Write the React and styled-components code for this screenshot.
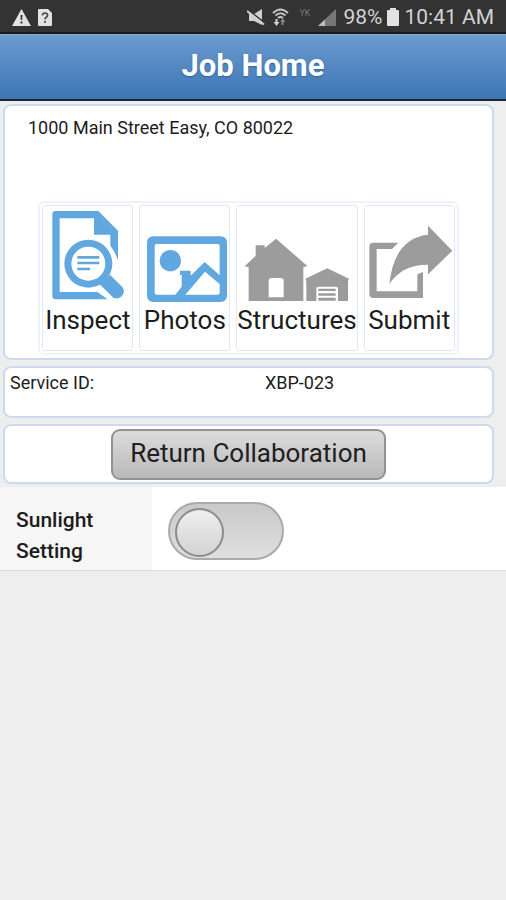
import React from "react";
import styled, { createGlobalStyle } from "styled-components";

const GlobalStyle = createGlobalStyle`
  *, *::before, *::after { box-sizing: border-box; }
  body {
    margin: 0;
    background: #eeeeee;
    color: #1c1c1c;
    font-family: Roboto, "Liberation Sans", sans-serif;
  }
`;

const StatusBar = styled.div`
  display: flex;
  align-items: center;
  justify-content: space-between;
  height: 34px;
  padding: 2px 12px 0;
  background: #333333;
  border-bottom: 2px solid #1d1718;
  color: #d2d2d2;
  font-size: 21px;
  line-height: 28px;
  white-space: nowrap;
`;

const StatusGroup = styled.div`
  display: flex;
  align-items: center;
  gap: ${(p) => p.$gap}px;
`;

const StatusIcon = styled.svg`
  display: block;
  flex: none;
`;

const NetworkTag = styled.span`
  align-self: flex-start;
  color: #777777;
  font-size: 9px;
  line-height: 20px;
  padding: 0 1px 0 3px;
`;

const Header = styled.header`
  display: flex;
  align-items: center;
  justify-content: center;
  height: 67px;
  padding: 0 0 2px;
  background: linear-gradient(#6b9bcf, #3d76b4);
  border-top: 1px solid #86a9cf;
  border-bottom: 2px solid #1b2532;
`;

const Title = styled.h1`
  margin: 0;
  color: #ffffff;
  font-size: 31px;
  line-height: 36px;
  font-weight: 700;
  text-shadow: 0 1px 2px #2f6299;
`;

const Panels = styled.main`
  display: flex;
  flex-direction: column;
  gap: 6px;
  padding: 3px 12px 3px 3px;
`;

const Panel = styled.section`
  background: #ffffff;
  border: 2px solid #cbdaee;
  border-radius: 8px;
`;

const JobPanel = styled(Panel)`
  display: flex;
  flex-direction: column;
  align-items: center;
  padding: 11px 0 3px;
`;

const Address = styled.p`
  align-self: stretch;
  margin: 0 0 62px;
  padding: 0 23px;
  font-size: 18px;
  line-height: 22px;
`;

const Actions = styled.nav`
  display: flex;
  gap: 6px;
  padding: 2px;
  border: 2px solid #edf2fc;
  border-radius: 6px;
`;

const Action = styled.button`
  display: flex;
  flex-direction: column;
  align-items: center;
  justify-content: flex-end;
  min-width: 91px;
  height: 146px;
  margin: 0;
  padding: 0 0 12px;
  background: #ffffff;
  border: 1px solid #dfe8fa;
  border-radius: 3px;
  color: inherit;
  font-family: inherit;
  font-size: 26px;
  line-height: 36px;
  cursor: pointer;
`;

const ActionIcon = styled.svg`
  display: block;
  fill: ${(p) => p.$color};
  stroke: none;
`;

const ServicePanel = styled(Panel)`
  padding: 4px 5px 22px;
`;

const Service = styled.dl`
  display: grid;
  grid-template-columns: 1fr 222px;
  margin: 0;
  font-size: 18px;
  line-height: 22px;
`;

const Term = styled.dt`
  margin: 0;
`;

const Detail = styled.dd`
  margin: 0;
`;

const ButtonPanel = styled(Panel)`
  display: flex;
  justify-content: center;
  padding: 3px 0 2px;
`;

const ReturnButton = styled.button`
  height: 51px;
  padding: 0 17px 3px;
  background: linear-gradient(#dcdcdc, #b9b9b9);
  border: 2px solid #929292;
  border-radius: 9px;
  color: #202020;
  font-family: inherit;
  font-size: 26px;
  line-height: 34px;
  cursor: pointer;
`;

const SettingRow = styled.div`
  display: grid;
  grid-template-columns: 3fr 7fr;
  min-height: 84px;
  background: #ffffff;
  border-bottom: 1px solid #dcdcdc;
`;

const SettingLabel = styled.label`
  padding: 18px 40px 0 16px;
  background: #f6f6f6;
  font-size: 21px;
  line-height: 31px;
  font-weight: 500;
`;

const SettingControl = styled.div`
  display: flex;
  align-items: center;
  padding: 4px 16px 0;
`;

const Switch = styled.input`
  appearance: none;
  display: flex;
  align-items: center;
  width: 116px;
  height: 58px;
  margin: 0;
  padding: 4px 5px 0;
  background: linear-gradient(#c9c9c9, #dfdfdf);
  border: 2px solid #aaaaaa;
  border-radius: 29px;
  cursor: pointer;

  &::before {
    content: "";
    width: 49px;
    height: 49px;
    background: linear-gradient(#eeeeee, #d3d3d3);
    border: 2px solid #8c8c8c;
    border-radius: 50%;
  }

  &:checked {
    justify-content: flex-end;
  }
`;

const BLUE = "#62a8e0";
const GRAY = "#9c9c9c";

function InspectIcon() {
  return (
    <ActionIcon $color={BLUE} width="74" height="92" viewBox="66 57 222 276" aria-hidden="true">
      <path d="M80 60H208L267 119V208Q258 182 244 164V131H195V82H92V303H205L236 325H80Q70 325 70 315V70Q70 60 80 60Z" />
      <path
        fillRule="evenodd"
        d="M178 146a72 72 0 1 0 0 144a72 72 0 1 0 0-144ZM178 167a51 51 0 1 1 0 102a51 51 0 1 1 0-102Z"
      />
      <path d="M243 251L280 288Q289 299 281 312Q270 327 253 320L209 277Q231 269 243 251Z" />
      <path d="M145 195h66v8h-66zM145 212h66v8h-66zM145 230h38v8h-38z" />
    </ActionIcon>
  );
}

function PhotosIcon() {
  return (
    <ActionIcon $color={BLUE} width="87" height="66" viewBox="339 136 261 198" aria-hidden="true">
      <path
        fillRule="evenodd"
        d="M377 137H577Q597 137 597 157V314Q597 334 577 334H377Q357 334 357 314V157Q357 137 377 137ZM386 160Q380 160 380 166V306Q380 312 386 312H442L461 288V253H456V240H488V255L530 214L575 254V166Q575 160 569 160ZM472 312H569Q575 312 575 306V280L531 243Z"
      />
      <circle cx="427" cy="210" r="32" />
    </ActionIcon>
  );
}

function StructuresIcon() {
  return (
    <ActionIcon $color={GRAY} width="106" height="64" viewBox="41 140 318 192" aria-hidden="true">
      <path
        fillRule="evenodd"
        d="M43 225L76 193V162H103V170L137 142L231 224L219 228V329H55V228ZM115 318H160V268Q160 260 151 260H124Q115 260 115 268Z"
      />
      <path
        fillRule="evenodd"
        d="M225 262L291 231L356 262L353 269V329H323V291Q323 286 317 286H264Q258 286 258 291V329H228V270Z"
      />
      <path d="M264 292h52v7h-52zM264 306h52v7h-52zM264 319h52v9h-52z" />
    </ActionIcon>
  );
}

function SubmitIcon() {
  return (
    <ActionIcon $color={GRAY} width="87" height="77" viewBox="408 103 261 231" aria-hidden="true">
      <path d="M430 156H505L486 175H440V302H562V251L579 244V322H430Q418 322 418 310V168Q418 156 430 156Z" />
      <path d="M594 105L667 180L594 251V222Q517 221 478 280Q493 143 594 132Z" />
    </ActionIcon>
  );
}

function WarningIcon() {
  return (
    <StatusIcon width="19" height="17" viewBox="0 0 19 17" aria-hidden="true">
      <path fill="#e2e2e2" d="M9.5 0L19 17H0Z" />
      <path fill="#333333" d="M8.5 6h2l-.3 5H8.8zM8.5 12.5h2v2h-2z" />
    </StatusIcon>
  );
}

function HelpFileIcon() {
  return (
    <StatusIcon width="14" height="17" viewBox="0 0 14 17" aria-hidden="true">
      <path fill="#e2e2e2" d="M1 0H10L14 4V16Q14 17 13 17H1Q0 17 0 16V1Q0 0 1 0Z" />
      <path fill="none" stroke="#444444" strokeWidth="1.6" d="M4.4 6.4Q4.5 4 7 4T9.6 6.3Q9.6 7.6 8 8.5Q7 9.2 7 10.6" />
      <path fill="#444444" d="M6.1 12h1.8v1.8H6.1z" />
    </StatusIcon>
  );
}

function MuteIcon() {
  return (
    <StatusIcon width="18" height="17" viewBox="0 0 18 17" aria-hidden="true">
      <path fill="#d0d0d0" d="M2 5H7L15 0V16L7 12H2Z" />
      <path stroke="#333333" strokeWidth="1.6" d="M1 1L18 14" />
      <path stroke="#d0d0d0" strokeWidth="2" d="M0 2L17 15.500" />
    </StatusIcon>
  );
}

function WifiIcon() {
  return (
    <StatusIcon width="17" height="18" viewBox="0 0 17 18" aria-hidden="true">
      <g fill="none" stroke="#c4c4c4" strokeWidth="2">
        <path d="M1 5Q8.500-2 16 5" />
        <path d="M3.500 7.500Q8.500 3 13.500 7.500" />
        <path d="M6 10Q8.500 8 11 10" />
      </g>
      <path fill="#d0d0d0" d="M5.500 11v3h2l-3 4l-3-4h2v-3z" />
      <path fill="#858585" d="M11.500 17v-3h2l-3-4l-2 4h1v3z" />
    </StatusIcon>
  );
}

function SignalIcon() {
  return (
    <StatusIcon width="18" height="17" viewBox="0 0 18 17" aria-hidden="true">
      <path fill="#777777" d="M18 0V17H0Z" />
      <path fill="#bcbcbc" d="M7 10.400V17H0Z" />
    </StatusIcon>
  );
}

function BatteryIcon() {
  return (
    <StatusIcon width="12" height="18" viewBox="0 0 12 18" aria-hidden="true">
      <path fill="#e2e2e2" d="M3 0H9V2H11Q12 2 12 3V17Q12 18 11 18H1Q0 18 0 17V3Q0 2 1 2H3Z" />
    </StatusIcon>
  );
}

const ACTIONS = [
  { label: "Inspect", Icon: InspectIcon },
  { label: "Photos", Icon: PhotosIcon },
  { label: "Structures", Icon: StructuresIcon },
  { label: "Submit", Icon: SubmitIcon },
];

export default function App() {
  return (
    <>
      <GlobalStyle />
      <StatusBar>
        <StatusGroup $gap={7}>
          <WarningIcon />
          <HelpFileIcon />
        </StatusGroup>
        <StatusGroup $gap={7}>
          <MuteIcon />
          <WifiIcon />
          <NetworkTag>YK</NetworkTag>
          <SignalIcon />
          <StatusGroup $gap={5}>
            <span>98%</span>
            <BatteryIcon />
            <span>10:41 AM</span>
          </StatusGroup>
        </StatusGroup>
      </StatusBar>
      <Header>
        <Title>Job Home</Title>
      </Header>
      <Panels>
        <JobPanel>
          <Address>1000 Main Street Easy, CO 80022</Address>
          <Actions aria-label="Job actions">
            {ACTIONS.map(({ label, Icon }) => (
              <Action key={label} type="button">
                <Icon />
                {label}
              </Action>
            ))}
          </Actions>
        </JobPanel>
        <ServicePanel>
          <Service>
            <Term>Service ID:</Term>
            <Detail>XBP-023</Detail>
          </Service>
        </ServicePanel>
        <ButtonPanel>
          <ReturnButton type="button">Return Collaboration</ReturnButton>
        </ButtonPanel>
      </Panels>
      <SettingRow>
        <SettingLabel htmlFor="sunlight">Sunlight Setting</SettingLabel>
        <SettingControl>
          <Switch id="sunlight" type="checkbox" role="switch" />
        </SettingControl>
      </SettingRow>
    </>
  );
}
